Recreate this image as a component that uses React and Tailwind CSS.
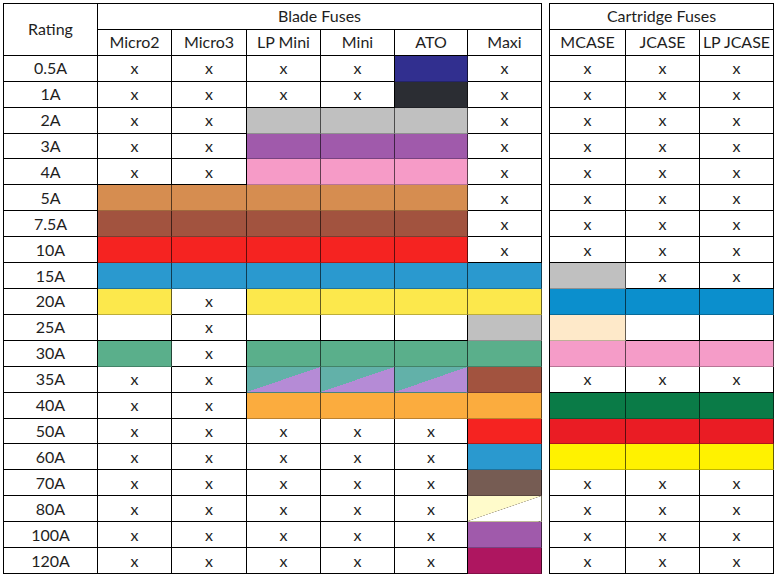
import React from 'react';

const C = {
  navy: 'bg-[#312f8f]',
  char: 'bg-[#2b2d33]',
  gray: 'bg-[#c0c0c0]',
  purple: 'bg-[#a05aab]',
  pink: 'bg-[#f69bc7]',
  tan: 'bg-[#d68d50]',
  brown: 'bg-[#a2533f]',
  red: 'bg-[#f52321]',
  blue: 'bg-[#2a99cf]',
  yellow: 'bg-[#fce84c]',
  green: 'bg-[#5aaf8b]',
  orange: 'bg-[#fbac3e]',
  taupe: 'bg-[#765c53]',
  magenta: 'bg-[#ae1660]',
  cblue: 'bg-[#0b8fcd]',
  peach: 'bg-[#fee9c9]',
  cpink: 'bg-[#f59cc8]',
  dgreen: 'bg-[#0a7b47]',
  cred: 'bg-[#ea1c24]',
  cyellow: 'bg-[#fff200]',
  diag: 'bg-[linear-gradient(to_top_left,#b58bd6_50%,#62b1a9_50%)]',
  diag2: 'bg-[linear-gradient(to_top_left,#ffffff_49%,#a8a08a_50%,#fffbcb_51%)]',
};

const rows = [
  ['0.5A', ['x', 'x', 'x', 'x', 'navy', 'x'], ['x', 'x', 'x']],
  ['1A', ['x', 'x', 'x', 'x', 'char', 'x'], ['x', 'x', 'x']],
  ['2A', ['x', 'x', 'gray', 'gray', 'gray', 'x'], ['x', 'x', 'x']],
  ['3A', ['x', 'x', 'purple', 'purple', 'purple', 'x'], ['x', 'x', 'x']],
  ['4A', ['x', 'x', 'pink', 'pink', 'pink', 'x'], ['x', 'x', 'x']],
  ['5A', ['tan', 'tan', 'tan', 'tan', 'tan', 'x'], ['x', 'x', 'x']],
  ['7.5A', ['brown', 'brown', 'brown', 'brown', 'brown', 'x'], ['x', 'x', 'x']],
  ['10A', ['red', 'red', 'red', 'red', 'red', 'x'], ['x', 'x', 'x']],
  ['15A', ['blue', 'blue', 'blue', 'blue', 'blue', 'blue'], ['gray', 'x', 'x']],
  ['20A', ['yellow', 'x', 'yellow', 'yellow', 'yellow', 'yellow'], ['cblue', 'cblue', 'cblue']],
  ['25A', ['', 'x', '', '', '', 'gray'], ['peach', '', '']],
  ['30A', ['green', 'x', 'green', 'green', 'green', 'green'], ['cpink', 'cpink', 'cpink']],
  ['35A', ['x', 'x', 'diag', 'diag', 'diag', 'brown'], ['x', 'x', 'x']],
  ['40A', ['x', 'x', 'orange', 'orange', 'orange', 'orange'], ['dgreen', 'dgreen', 'dgreen']],
  ['50A', ['x', 'x', 'x', 'x', 'x', 'red'], ['cred', 'cred', 'cred']],
  ['60A', ['x', 'x', 'x', 'x', 'x', 'blue'], ['cyellow', 'cyellow', 'cyellow']],
  ['70A', ['x', 'x', 'x', 'x', 'x', 'taupe'], ['x', 'x', 'x']],
  ['80A', ['x', 'x', 'x', 'x', 'x', 'diag2'], ['x', 'x', 'x']],
  ['100A', ['x', 'x', 'x', 'x', 'x', 'purple'], ['x', 'x', 'x']],
  ['120A', ['x', 'x', 'x', 'x', 'x', 'magenta'], ['x', 'x', 'x']],
];

function Cell({ v }) {
  if (v === 'x' || v === '') {
    return <div className="flex items-center justify-center border-r border-b border-black bg-white">{v}</div>;
  }
  return <div className={'border-r border-b border-r-black/60 border-b-black/25 ' + C[v]}></div>;
}

function Head({ children, className = '' }) {
  return <div className={'flex items-center justify-center border-r border-b border-black bg-white ' + className}>{children}</div>;
}

export default function App() {
  return (
    <div className="w-[776px] h-[578px] bg-white pl-[3px] pt-[3px] flex gap-[7px] text-[16px] text-[#1e1e1e] font-['Lato','Open_Sans',sans-serif]">
      <div className="grid grid-cols-[94px_74px_75px_74px_74px_73px_74px] grid-rows-[repeat(22,minmax(0,1fr))] h-[571px] border-l border-t border-black">
        <Head className="row-span-2">Rating</Head>
        <Head className="col-span-6">Blade Fuses</Head>
        <Head>Micro2</Head>
        <Head>Micro3</Head>
        <Head>LP Mini</Head>
        <Head>Mini</Head>
        <Head>ATO</Head>
        <Head>Maxi</Head>
        {rows.map(([r, b]) => (
          <React.Fragment key={r}>
            <Head>{r}</Head>
            {b.map((v, i) => <Cell key={i} v={v} />)}
          </React.Fragment>
        ))}
      </div>
      <div className="grid grid-cols-[76px_74px_74px] grid-rows-[repeat(22,minmax(0,1fr))] h-[571px] border-l border-t border-black">
        <Head className="col-span-3">Cartridge Fuses</Head>
        <Head>MCASE</Head>
        <Head>JCASE</Head>
        <Head>LP JCASE</Head>
        {rows.map(([r, , c]) => (
          <React.Fragment key={r}>
            {c.map((v, i) => <Cell key={i} v={v} />)}
          </React.Fragment>
        ))}
      </div>
    </div>
  );
}
